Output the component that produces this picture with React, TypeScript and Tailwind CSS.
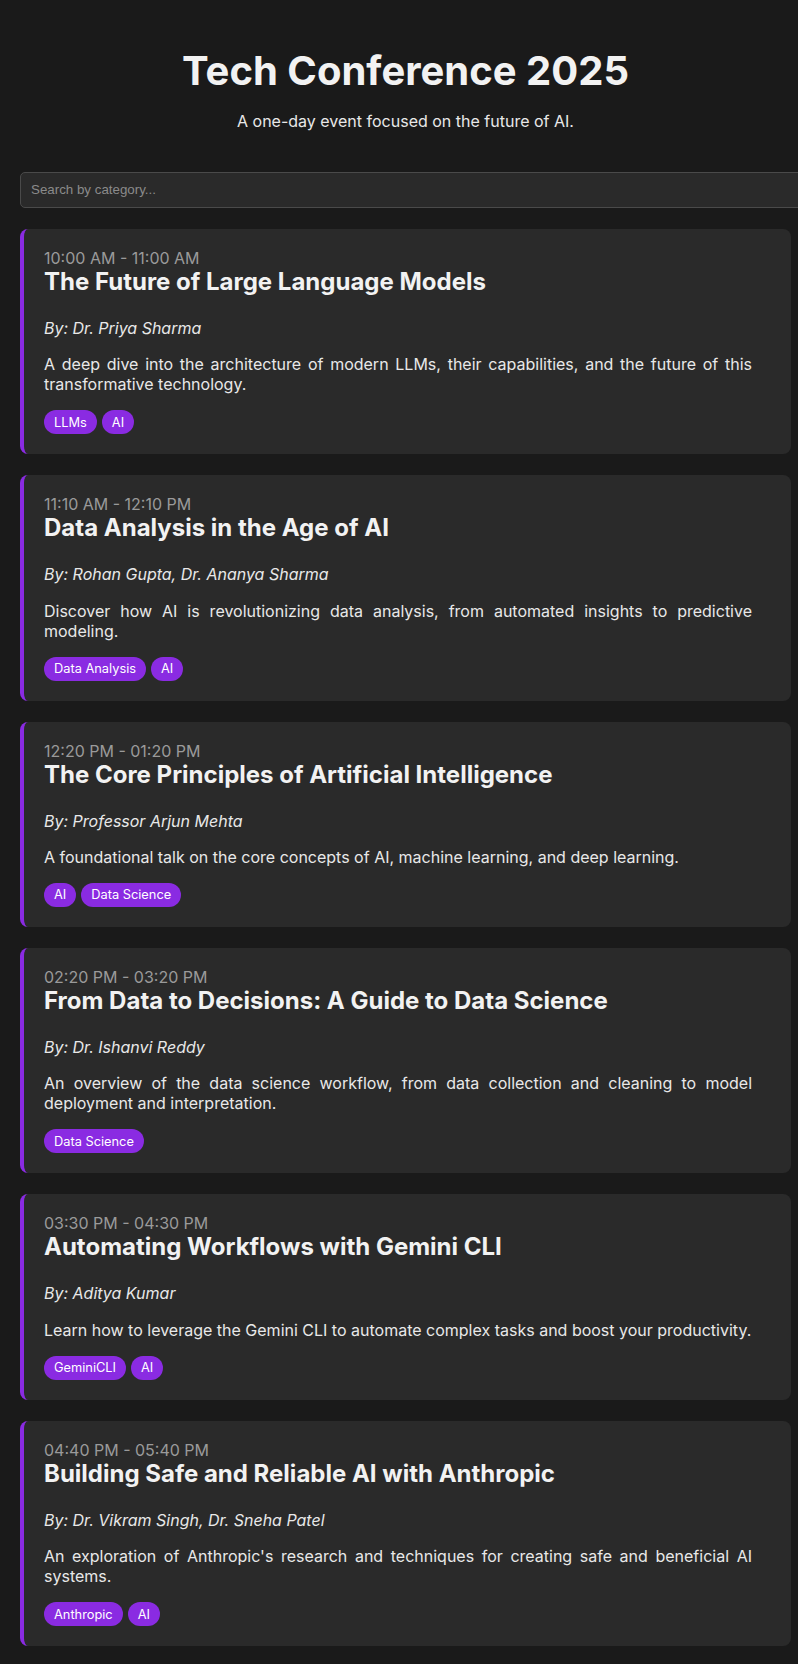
import React from "react";

type Session = {
  time: string;
  title: string;
  speakers: string;
  desc: string;
  tags: string[];
};

const sessions: Session[] = [
  {
    time: "10:00 AM - 11:00 AM",
    title: "The Future of Large Language Models",
    speakers: "Dr. Priya Sharma",
    desc: "A deep dive into the architecture of modern LLMs, their capabilities, and the future of this transformative technology.",
    tags: ["LLMs", "AI"],
  },
  {
    time: "11:10 AM - 12:10 PM",
    title: "Data Analysis in the Age of AI",
    speakers: "Rohan Gupta, Dr. Ananya Sharma",
    desc: "Discover how AI is revolutionizing data analysis, from automated insights to predictive modeling.",
    tags: ["Data Analysis", "AI"],
  },
  {
    time: "12:20 PM - 01:20 PM",
    title: "The Core Principles of Artificial Intelligence",
    speakers: "Professor Arjun Mehta",
    desc: "A foundational talk on the core concepts of AI, machine learning, and deep learning.",
    tags: ["AI", "Data Science"],
  },
  {
    time: "02:20 PM - 03:20 PM",
    title: "From Data to Decisions: A Guide to Data Science",
    speakers: "Dr. Ishanvi Reddy",
    desc: "An overview of the data science workflow, from data collection and cleaning to model deployment and interpretation.",
    tags: ["Data Science"],
  },
  {
    time: "03:30 PM - 04:30 PM",
    title: "Automating Workflows with Gemini CLI",
    speakers: "Aditya Kumar",
    desc: "Learn how to leverage the Gemini CLI to automate complex tasks and boost your productivity.",
    tags: ["GeminiCLI", "AI"],
  },
  {
    time: "04:40 PM - 05:40 PM",
    title: "Building Safe and Reliable AI with Anthropic",
    speakers: "Dr. Vikram Singh, Dr. Sneha Patel",
    desc: "An exploration of Anthropic's research and techniques for creating safe and beneficial AI systems.",
    tags: ["Anthropic", "AI"],
  },
];

function Card({ s }: { s: Session }) {
  return (
    <div className="bg-[#2a2a2a] rounded-[8px] border-l-4 border-[#8a2be2] pt-[20px] pb-[20px] pl-[20px] pr-[39px]">
      <div className="text-[16px] leading-[18px] text-[#9a9a9a]">{s.time}</div>
      <h3 className="text-[24px] leading-[29px] font-bold text-[#f2f2f2]">{s.title}</h3>
      <p className="mt-[23px] text-[16px] leading-[19.4px] italic text-[#e8e8e8]">By: {s.speakers}</p>
      <p className="mt-[16px] text-[16px] leading-[20px] text-justify text-[#e8e8e8]">{s.desc}</p>
      <div className="mt-[16px] flex gap-[5px]">
        {s.tags.map((t) => (
          <span
            key={t}
            className="bg-[#8a2be2] text-white rounded-full px-[10px] h-[24px] flex items-center text-[12.8px]"
          >
            {t}
          </span>
        ))}
      </div>
    </div>
  );
}

export default function App() {
  return (
    <div
      className="min-h-screen bg-[#1a1a1a] overflow-x-hidden text-[#e8e8e8]"
      style={{ fontFamily: "Inter, 'Noto Sans', sans-serif" }}
    >
      <div className="pl-[20px] pr-[7px] pb-[21px]">
        <header className="pt-[47px] text-center">
          <h1 className="text-[40px] leading-[48.4px] font-bold text-[#f2f2f2]">Tech Conference 2025</h1>
          <p className="mt-[17px] text-[16px] leading-[19.4px] text-[#e8e8e8]">
            A one-day event focused on the future of AI.
          </p>
        </header>
        <input
          type="text"
          placeholder="Search by category..."
          className="mt-[40px] block w-[calc(100%+22px)] h-[36px] px-[10px] bg-[#2a2a2a] border border-[#4a4a4a] rounded-[5px] text-[13.33px] text-[#ddd] placeholder:text-[#8a8a8a] outline-none"
          style={{ fontFamily: "'Liberation Sans', Arial, sans-serif" }}
        />
        <div className="mt-[21px] flex flex-col gap-[21px]">
          {sessions.map((s) => (
            <Card key={s.time} s={s} />
          ))}
        </div>
      </div>
    </div>
  );
}
